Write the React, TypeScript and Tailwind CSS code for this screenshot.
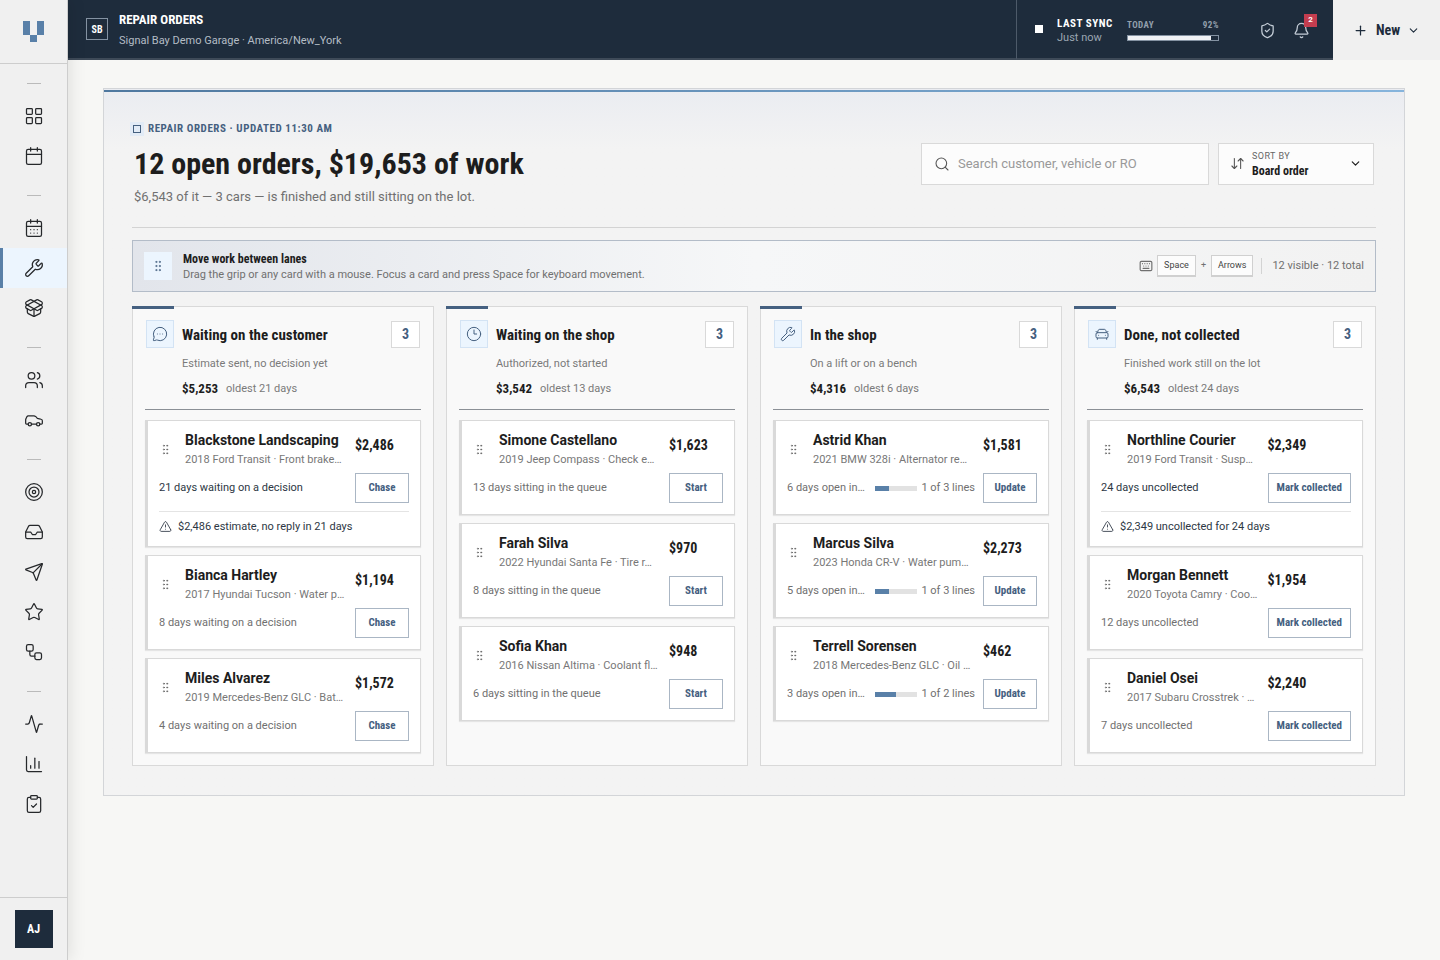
import { useState } from 'react';
import {
  Activity,
  ArrowDownUp,
  Bell,
  Calendar,
  CalendarDays,
  Car,
  CarFront,
  ChartColumn,
  ChevronDown,
  ClipboardCheck,
  Clock3,
  GripVertical,
  Inbox,
  Keyboard,
  LayoutGrid,
  MessageCircleMore,
  PackageOpen,
  Plus,
  Search,
  Send,
  ShieldCheck,
  Star,
  Target,
  TriangleAlert,
  Users,
  Workflow,
  Wrench,
  type LucideIcon,
} from 'lucide-react';

const COND = "font-['Liberation_Sans_Narrow','Roboto_Condensed','Roboto',sans-serif]";

type Order = {
  name: string;
  job: string;
  amount: string;
  status: string;
  alert?: string;
  progress?: { done: number; total: number };
};

type Lane = {
  title: string;
  hint: string;
  total: string;
  oldest: string;
  action: string;
  icon: LucideIcon;
  orders: Order[];
};

const navGroups: { label: string; icon: LucideIcon; active?: boolean }[][] = [
  [
    { label: 'Dashboard', icon: LayoutGrid },
    { label: 'Calendar', icon: Calendar },
  ],
  [
    { label: 'Appointments', icon: CalendarDays },
    { label: 'Repair orders', icon: Wrench, active: true },
    { label: 'Parts', icon: PackageOpen },
  ],
  [
    { label: 'Customers', icon: Users },
    { label: 'Vehicles', icon: Car },
  ],
  [
    { label: 'Campaigns', icon: Target },
    { label: 'Inbox', icon: Inbox },
    { label: 'Outreach', icon: Send },
    { label: 'Reviews', icon: Star },
    { label: 'Automations', icon: Workflow },
  ],
  [
    { label: 'Activity', icon: Activity },
    { label: 'Reports', icon: ChartColumn },
    { label: 'Inspections', icon: ClipboardCheck },
  ],
];

const lanes: Lane[] = [
  {
    title: 'Waiting on the customer',
    hint: 'Estimate sent, no decision yet',
    total: '$5,253',
    oldest: 'oldest 21 days',
    action: 'Chase',
    icon: MessageCircleMore,
    orders: [
      {
        name: 'Blackstone Landscaping',
        job: '2018 Ford Transit · Front brake…',
        amount: '$2,486',
        status: '21 days waiting on a decision',
        alert: '$2,486 estimate, no reply in 21 days',
      },
      { name: 'Bianca Hartley', job: '2017 Hyundai Tucson · Water p…', amount: '$1,194', status: '8 days waiting on a decision' },
      { name: 'Miles Alvarez', job: '2019 Mercedes-Benz GLC · Bat…', amount: '$1,572', status: '4 days waiting on a decision' },
    ],
  },
  {
    title: 'Waiting on the shop',
    hint: 'Authorized, not started',
    total: '$3,542',
    oldest: 'oldest 13 days',
    action: 'Start',
    icon: Clock3,
    orders: [
      { name: 'Simone Castellano', job: '2019 Jeep Compass · Check e…', amount: '$1,623', status: '13 days sitting in the queue' },
      { name: 'Farah Silva', job: '2022 Hyundai Santa Fe · Tire r…', amount: '$970', status: '8 days sitting in the queue' },
      { name: 'Sofia Khan', job: '2016 Nissan Altima · Coolant fl…', amount: '$948', status: '6 days sitting in the queue' },
    ],
  },
  {
    title: 'In the shop',
    hint: 'On a lift or on a bench',
    total: '$4,316',
    oldest: 'oldest 6 days',
    action: 'Update',
    icon: Wrench,
    orders: [
      { name: 'Astrid Khan', job: '2021 BMW 328i · Alternator re…', amount: '$1,581', status: '6 days open in…', progress: { done: 1, total: 3 } },
      { name: 'Marcus Silva', job: '2023 Honda CR-V · Water pum…', amount: '$2,273', status: '5 days open in…', progress: { done: 1, total: 3 } },
      { name: 'Terrell Sorensen', job: '2018 Mercedes-Benz GLC · Oil …', amount: '$462', status: '3 days open in…', progress: { done: 1, total: 2 } },
    ],
  },
  {
    title: 'Done, not collected',
    hint: 'Finished work still on the lot',
    total: '$6,543',
    oldest: 'oldest 24 days',
    action: 'Mark collected',
    icon: CarFront,
    orders: [
      {
        name: 'Northline Courier',
        job: '2019 Ford Transit · Susp…',
        amount: '$2,349',
        status: '24 days uncollected',
        alert: '$2,349 uncollected for 24 days',
      },
      { name: 'Morgan Bennett', job: '2020 Toyota Camry · Coo…', amount: '$1,954', status: '12 days uncollected' },
      { name: 'Daniel Osei', job: '2017 Subaru Crosstrek · …', amount: '$2,240', status: '7 days uncollected' },
    ],
  },
];

function Sidebar() {
  return (
    <aside className="sticky top-0 z-10 flex h-screen w-[68px] shrink-0 flex-col border-r border-[#cdcdcd] bg-[#f0f0f0] shadow-[2px_0_16px_rgba(0,0,0,0.10)]">
      <a href="#home" aria-label="Home" className="flex h-16 shrink-0 items-center justify-center border-b border-[#cdcdcd] pl-px">
        <svg width="22" height="21" viewBox="0 0 22 21" className="fill-[#5980a8]" shapeRendering="crispEdges">
          <rect x="0" y="0" width="7" height="14" />
          <rect x="14" y="0" width="7" height="14" />
          <rect x="7" y="14" width="7" height="7" />
        </svg>
      </a>
      <nav className="flex-1">
        {navGroups.map((group, i) => (
          <div key={i}>
            <div className="mx-auto mt-[19px] mb-3 h-px w-3.5 bg-[#bababa]" />
            {group.map(({ label, icon: Icon, active }) => (
              <a
                key={label}
                href="#nav"
                aria-label={label}
                className={`flex h-10 items-center justify-center text-[#26282b] ${active ? 'border-l-3 border-[#5980a8] bg-[#ecf5fe] pr-0.5' : 'pl-px'}`}
              >
                <Icon size={20} strokeWidth={1.5} />
              </a>
            ))}
          </div>
        ))}
      </nav>
      <div className="flex justify-center border-t border-[#cdcdcd] py-3">
        <button aria-label="Account" className={`size-[38px] bg-[#1e2c3c] text-xs font-bold text-white ${COND}`}>
          AJ
        </button>
      </div>
    </aside>
  );
}

function TopBar() {
  return (
    <header className="flex h-[60px] bg-[#1e2c3c]">
      <div className="flex min-w-0 flex-1 items-center border-b-2 border-[#3e4a58] pl-[18px]">
        <div className={`flex size-[22px] items-center justify-center border border-[#8492a2] text-[10px] font-bold text-white ${COND}`}>SB</div>
        <div className="ml-[11px] pt-1">
          <div className={`text-[13px] leading-5 font-bold text-white ${COND}`}>REPAIR ORDERS</div>
          <div className="text-[11px] leading-[22px] text-[#b4bcc5]">Signal Bay Demo Garage · America/New_York</div>
        </div>
      </div>
      <div className="flex items-center border-b-2 border-l border-b-[#3e4a58] border-l-[#4d5a69] pr-[23px] pl-[18px]">
        <span className="size-2 bg-white" />
        <div className="ml-3.5 w-14 pt-1 whitespace-nowrap">
          <div className={`text-[11px] leading-[14px] font-bold tracking-wider text-white ${COND}`}>LAST SYNC</div>
          <div className="text-[11px] leading-[14px] text-[#9ba6b2]">Just now</div>
        </div>
        <div className="ml-3.5 w-[92px]">
          <div className={`flex justify-between text-[9px] leading-4 font-bold tracking-wider text-[#94a0ad] ${COND}`}>
            <span>TODAY</span>
            <span>92%</span>
          </div>
          <div className="mt-0.5 h-1.5 border border-[#8492a2]">
            <div className="h-full w-[92%] bg-[#f0f2f5]" />
          </div>
        </div>
        <button aria-label="Security" className="ml-10 pt-0.5 text-[#c3ccd6]">
          <ShieldCheck size={17} strokeWidth={1.8} />
        </button>
        <button aria-label="Notifications" className="relative ml-[17px] pt-0.5 text-[#c3ccd6]">
          <Bell size={17} strokeWidth={1.8} />
          <span className="absolute -top-1.5 -right-[7px] flex size-[13px] items-center justify-center bg-[#c43d4f] font-['Roboto',sans-serif] text-[8px] font-bold text-white">2</span>
        </button>
      </div>
      <button className={`flex w-[107px] items-center bg-[#f0f0f0] pl-5 text-sm font-bold text-[#1e2c3c] ${COND}`}>
        <Plus size={15} strokeWidth={2} />
        <span className="ml-2 flex-1 text-left">New</span>
        <ChevronDown size={13} strokeWidth={2} className="mr-5" />
      </button>
    </header>
  );
}

function OrderCard({ order, action }: { order: Order; action: string }) {
  const { name, job, amount, status, alert, progress } = order;
  return (
    <article className="grid grid-cols-[minmax(0,1fr)_auto] gap-x-2 border border-l-3 border-[#d9d9d9] bg-white px-[11px] pt-2.5 pb-[11px] shadow-[0_1px_1px_rgba(0,0,0,0.08)]">
      <div className="flex min-w-0">
        <GripVertical size={13} strokeWidth={1.5} className="mt-3 shrink-0 text-[#666]" />
        <div className="ml-[13px] min-w-0 whitespace-nowrap">
          <h3 className="text-sm leading-[19px] font-bold text-[#1d1d1d]">{name}</h3>
          <p className="text-[11px] leading-[19px] text-[#777]">{job}</p>
        </div>
      </div>
      <div className={`text-sm leading-7 font-bold text-[#1d1d1d] ${COND}`}>{amount}</div>
      <div className={`mt-1 flex min-w-0 items-center text-[11px] whitespace-nowrap ${alert ? 'text-[#2d3744]' : 'text-[#707070]'}`}>
        <span className="flex-1">{status}</span>
        {progress && (
          <>
            <span className="mr-1 h-[5px] w-[42px] bg-[#e2e2e2]">
              <span className="block h-full bg-[#5980a8]" style={{ width: `${(progress.done / progress.total) * 100}%` }} />
            </span>
            <span>
              {progress.done} of {progress.total} lines
            </span>
          </>
        )}
      </div>
      <button className={`mt-1 h-[30px] min-w-[54px] border border-[#aab6c4] bg-white px-2 text-[11px] font-bold text-[#456080] ${COND}`}>{action}</button>
      {alert && (
        <div className="col-span-2 mt-2 flex items-center gap-1.5 border-t border-[#e4e4e4] pt-1.5 text-[11px] leading-[17px] text-[#2d3744]">
          <TriangleAlert size={13} strokeWidth={1.6} />
          {alert}
        </div>
      )}
    </article>
  );
}

function LaneColumn({ lane }: { lane: Lane }) {
  const Icon = lane.icon;
  return (
    <section className="relative border border-[#d9d9d9] bg-[#f9f9f9] p-3">
      <span className="absolute -top-px -left-px h-[3px] w-[42px] bg-[#456080]" />
      <header className="border-b border-[#8b9096] px-px pt-px pb-[9px]">
        <div className="flex items-center">
          <span className="flex size-7 items-center justify-center border border-[#d3e3f4] bg-[#ecf5fe] text-[#456080]">
            <Icon size={16} strokeWidth={1.5} />
          </span>
          <h2 className={`ml-2 flex-1 pt-0.5 text-[15px] font-bold text-[#1d1d1d] ${COND}`}>{lane.title}</h2>
          <span className={`flex h-[27px] w-[29px] items-center justify-center border border-[#d9d9d9] bg-white text-sm font-bold text-[#456080] ${COND}`}>
            {lane.orders.length}
          </span>
        </div>
        <div className="pl-9 text-[11px] text-[#7a7a7a]">
          <p className="mt-2 leading-4">{lane.hint}</p>
          <p className="mt-1.5 flex items-center gap-2 leading-[22px]">
            <strong className={`text-[13px] font-bold text-[#1d1d1d] ${COND}`}>{lane.total}</strong>
            {lane.oldest}
          </p>
        </div>
      </header>
      <div className="mt-2.5 space-y-2">
        {lane.orders.map((order) => (
          <OrderCard key={order.name} order={order} action={lane.action} />
        ))}
      </div>
    </section>
  );
}

export default function App() {
  const [query, setQuery] = useState('');

  return (
    <div className="flex min-h-screen bg-[#f7f7f5] font-['Roboto',sans-serif]">
      <Sidebar />
      <div className="min-w-0 flex-1">
        <TopBar />
        <main className="px-[35px] py-7">
          <div className="border border-[#d3d5d8] bg-[#f3f3f3] bg-linear-to-b from-[#eaecf1] to-[#f3f3f3] to-[60px] pt-px">
            <div className="h-0.5 bg-linear-to-r from-[#4f789f] to-[#86b4dc]" />
            <div className="px-7 pt-7 pb-[29px]">
              <div className="flex items-center justify-between border-b border-[#d3d3d3] px-0.5 pb-5">
                <div>
                  <div className={`flex items-center text-[11px] leading-[18px] font-bold tracking-wider text-[#456080] ${COND}`}>
                    <span className="mr-1 -ml-1 flex size-3.5 items-center justify-center bg-[#e2ebf6]">
                      <span className="size-2 border border-[#456080]" />
                    </span>
                    REPAIR ORDERS · UPDATED 11:30 AM
                  </div>
                  <h1 className={`mt-1.5 text-3xl leading-[39px] font-bold text-[#1d1d1d] ${COND}`}>12 open orders, $19,653 of work</h1>
                  <p className="mt-1 text-[13px] leading-5 text-[#707070]">$6,543 of it — 3 cars — is finished and still sitting on the lot.</p>
                </div>
                <div className="flex gap-[9px]">
                  <label className="flex h-[42px] w-72 items-center border border-[#d9d9d9] bg-[#fcfcfc] px-3 text-[#555]">
                    <Search size={16} strokeWidth={1.6} />
                    <input
                      type="search"
                      aria-label="Search orders"
                      value={query}
                      onChange={(e) => setQuery(e.target.value)}
                      placeholder="Search customer, vehicle or RO"
                      className="ml-2 flex-1 bg-transparent text-[13px] outline-none placeholder:text-[#999]"
                    />
                  </label>
                  <label className="flex h-[42px] w-[156px] items-center border border-[#d9d9d9] bg-[#fcfcfc] px-[11px] text-[#555]">
                    <ArrowDownUp size={15} strokeWidth={1.7} />
                    <span className="ml-[7px] flex flex-1 flex-col">
                      <span className="text-[9px] leading-[14px] tracking-wider text-[#666]">SORT BY</span>
                      <select className={`appearance-none bg-transparent text-xs leading-4 font-bold text-[#1d1d1d] outline-none ${COND}`}>
                        <option>Board order</option>
                      </select>
                    </span>
                    <ChevronDown size={13} strokeWidth={2.2} className="text-[#1d1d1d]" />
                  </label>
                </div>
              </div>

              <div className="mt-3 flex h-[52px] items-center border border-[#b3bcc8] bg-linear-to-r from-[#e2e5eb] via-[#f6f7f8] to-[#f2f2f2] px-[11px] text-[11px] text-[#707070]">
                <span className="flex size-7 items-center justify-center bg-[#ecf5fe] text-[#456080]">
                  <GripVertical size={14} strokeWidth={1.5} />
                </span>
                <div className="ml-[11px] flex-1">
                  <div className={`text-xs leading-4 font-bold text-[#1d1d1d] ${COND}`}>Move work between lanes</div>
                  <p className="leading-[15px]">Drag the grip or any card with a mouse. Focus a card and press Space for keyboard movement.</p>
                </div>
                <Keyboard size={14} strokeWidth={2} />
                <kbd className="ml-1 border border-b-2 border-[#d0d0d0] bg-[#fcfcfc] px-1.5 font-['Roboto',sans-serif] text-[9px] leading-[19px] text-[#444]">Space</kbd>
                <span className="mx-[5px] text-[9px]">+</span>
                <kbd className="border border-b-2 border-[#d0d0d0] bg-[#fcfcfc] px-1.5 font-['Roboto',sans-serif] text-[9px] leading-[19px] text-[#444]">Arrows</kbd>
                <span className="ml-2 border-l border-[#d3d3d3] pl-2.5">12 visible · 12 total</span>
              </div>

              <div className="mt-3.5 grid grid-cols-4 gap-3">
                {lanes.map((lane) => (
                  <LaneColumn key={lane.title} lane={lane} />
                ))}
              </div>
            </div>
          </div>
        </main>
      </div>
    </div>
  );
}
